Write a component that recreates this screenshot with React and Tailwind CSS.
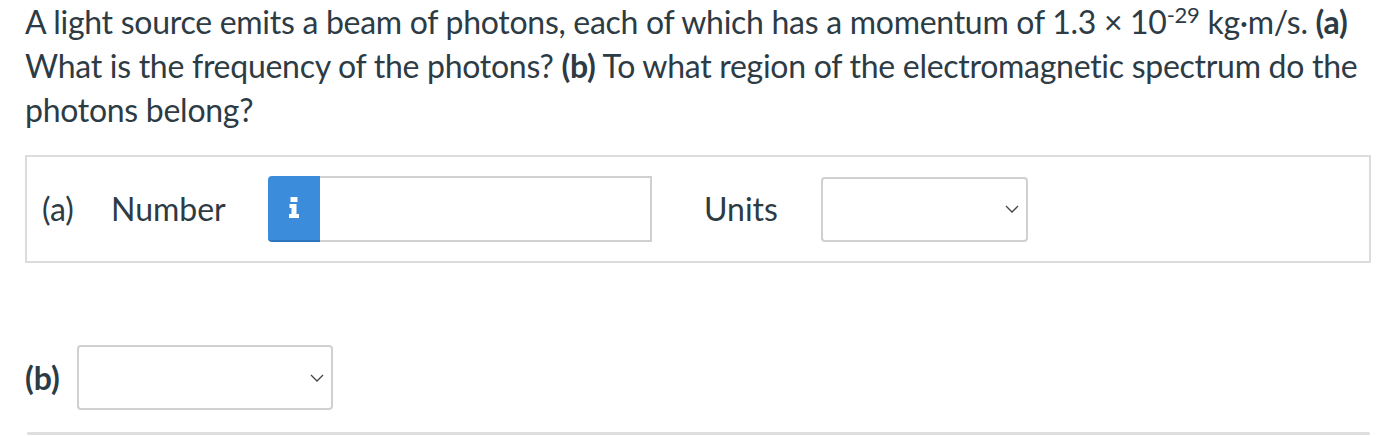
import React from 'react';

function Chevron({ className }) {
  return (
    <svg viewBox="0 0 14 8" className={className} fill="none" stroke="#444" strokeWidth="1.3">
      <path d="M1 1l6 6 6-6" />
    </svg>
  );
}

function InfoGlyph() {
  return (
    <svg viewBox="0 0 12 22" className="w-[12px] h-[22px]" fill="#fff">
      <rect x="2.5" y="0" width="7" height="5" rx="0.5" />
      <path d="M1.5 7h7v10h2.5v4H1v-4h2.5v-6H1.5z" />
    </svg>
  );
}

function SelectBox({ width }) {
  return (
    <div className={`${width} h-[65px] border-2 border-[#d0d0d0] rounded-[4px] bg-white flex items-center justify-end pr-[7px]`}>
      <Chevron className="w-[14px] h-[8px]" />
    </div>
  );
}

export default function App() {
  return (
    <div className="w-[1394px] h-[436px] bg-white text-[#2d3b45] font-['Lato',sans-serif] pl-[25px] pr-[23px] overflow-hidden">
      <p className="text-[32px] leading-[44px] tracking-[-0.28px]">
        A light source emits a beam of photons, each of which has a momentum of 1.3 × 10
        <sup className="text-[22px]">-29</sup> kg·m/s. <b>(a)</b> What is the frequency of the photons? <b>(b)</b> To what region of the electromagnetic spectrum do the photons belong?
      </p>

      {/* part a */}
      <div className="mt-[23px] h-[108px] w-[1346px] border-2 border-[#dcdcdc] flex items-center pl-[15px] text-[32px]">
        <span className="w-[69px]">(a)</span>
        <span className="w-[157px]">Number</span>
        <div className="flex h-[66px]">
          <div className="w-[52px] h-full bg-[#3b8cdb] border-b-2 border-[#2f75bd] rounded-l-[4px] flex items-center justify-center">
            <InfoGlyph />
          </div>
          <div className="w-[332px] h-full border-2 border-l-0 border-[#d0d0d0] bg-white" />
        </div>
        <span className="ml-[52px] w-[117px]">Units</span>
        <SelectBox width="w-[207px]" />
      </div>

      {/* part b */}
      <div className="mt-[82px] flex items-center gap-[17px] text-[32px]">
        <span className="font-bold">(b)</span>
        <SelectBox width="w-[256px]" />
      </div>

      <div className="mt-[22px] ml-[2px] w-[1343px] h-[3px] bg-[#dedede] rounded-full" />
    </div>
  );
}
